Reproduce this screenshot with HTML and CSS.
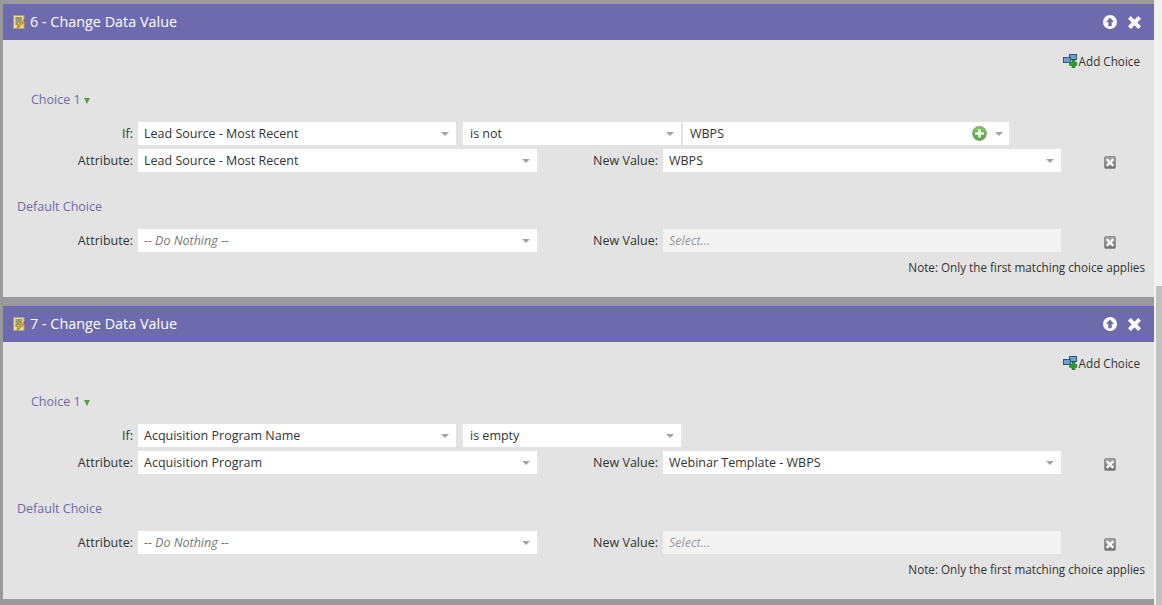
FILE: index.html
```html
<!DOCTYPE html>
<html lang="en">
<head>
<meta charset="utf-8">
<title>Change Data Value</title>
<link rel="stylesheet" href="styles.css">
</head>
<body>
<svg class="defs" width="0" height="0" aria-hidden="true">
  <defs>
    <linearGradient id="g-del" x1="0" y1="0" x2="0" y2="1">
      <stop offset="0" stop-color="#a6a6a6"/>
      <stop offset="1" stop-color="#6e6e6e"/>
    </linearGradient>
    <linearGradient id="g-plus" x1="0" y1="0" x2="0" y2="1">
      <stop offset="0" stop-color="#7ccc5c"/>
      <stop offset="1" stop-color="#4da53c"/>
    </linearGradient>
  </defs>
  <symbol id="ico-flow" viewBox="0 0 13 14">
    <rect x="0.5" y="0.5" width="10.500" height="13" fill="#ebe09a" stroke="#a8a272"/>
    <path d="M2.500 3h6.500M2.500 5h6.500M2.500 7h5M2.500 9h2.500" stroke="#4f4c38" fill="none"/>
    <path d="M4 12.800l.7-2.300 4.300-4.300 1.600 1.600-4.300 4.300z" fill="#e3a52a" stroke="#6d5412" stroke-width=".5"/>
    <path d="M10 5.200l1-1 1.500 1.500-1 1z" fill="#c5392a"/>
  </symbol>
  <symbol id="ico-up" viewBox="0 0 14 14">
    <circle cx="7" cy="7" r="7" fill="#fff"/>
    <path d="M7 2.600L11 7H8.700v4.200H5.300V7H3z" fill="#6e6aae"/>
  </symbol>
  <symbol id="ico-close" viewBox="0 0 14 14">
    <path d="M3 0L7 4l4-4 3 3-4 4 4 4-3 3-4-4-4 4-3-3 4-4-4-4z" fill="#fff"/>
  </symbol>
  <symbol id="ico-del" viewBox="0 0 12 13">
    <rect x=".5" y=".5" width="11" height="12" rx="1.500" fill="url(#g-del)" stroke="#929292"/>
    <path d="M3.600 2.300L6 4.700l2.400-2.400 1.800 1.800-2.400 2.400 2.400 2.400-1.800 1.800L6 8.300l-2.400 2.400-1.800-1.800 2.400-2.400-2.400-2.400z" fill="#f6f6f6"/>
  </symbol>
  <symbol id="ico-add" viewBox="0 0 14 14">
    <rect x="6.500" y="0.5" width="7" height="5" fill="#6f9fd0" stroke="#2f5878"/>
    <rect x="0.5" y="3.500" width="7" height="5" fill="#6f9fd0" stroke="#2f5878"/>
    <path d="M9 6h3v2.500h2v3h-2V14H9v-2.500H6.500v-3H9z" fill="#2f9a35" stroke="#1d6a22" stroke-width=".5"/>
  </symbol>
  <symbol id="ico-plus" viewBox="0 0 14 14">
    <circle cx="7" cy="7" r="6.400" fill="url(#g-plus)" stroke="#8f9a8a" stroke-width="1.100"/>
    <path d="M5.800 3h2.400v2.800H11v2.400H8.200V11H5.800V8.200H3V5.800h2.800z" fill="#eef8e8"/>
  </symbol>
</svg>

<main class="page">
  <section class="card">
    <header class="card-head">
      <svg class="ico-flow"><use href="#ico-flow"/></svg>
      <h2 class="card-title">6 - Change Data Value</h2>
      <svg class="ico-up"><use href="#ico-up"/></svg>
      <svg class="ico-close"><use href="#ico-close"/></svg>
    </header>
    <div class="card-body">
      <div class="add-row"><svg class="ico-add"><use href="#ico-add"/></svg><span>Add Choice</span></div>
      <div class="choice-title"><span>Choice 1</span><i class="green-arrow"></i></div>
      <div class="row row-if">
        <label class="lab">If:</label>
        <div class="sel w-field">Lead Source - Most Recent<i class="caret"></i></div>
        <div class="sel w-op">is not<i class="caret"></i></div>
        <div class="sel w-val">WBPS<svg class="ico-plus"><use href="#ico-plus"/></svg><i class="caret"></i></div>
      </div>
      <div class="row row-attr">
        <label class="lab">Attribute:</label>
        <div class="sel w-attr">Lead Source - Most Recent<i class="caret"></i></div>
        <label class="lab-new">New Value:</label>
        <div class="sel w-new">WBPS<i class="caret"></i></div>
        <svg class="ico-del"><use href="#ico-del"/></svg>
      </div>
      <div class="default-title">Default Choice</div>
      <div class="row row-attr">
        <label class="lab">Attribute:</label>
        <div class="sel w-attr ph">-- Do Nothing --<i class="caret"></i></div>
        <label class="lab-new">New Value:</label>
        <div class="sel w-new ph off">Select...</div>
        <svg class="ico-del"><use href="#ico-del"/></svg>
      </div>
      <p class="note">Note: Only the first matching choice applies</p>
    </div>
  </section>

  <section class="card">
    <header class="card-head">
      <svg class="ico-flow"><use href="#ico-flow"/></svg>
      <h2 class="card-title">7 - Change Data Value</h2>
      <svg class="ico-up"><use href="#ico-up"/></svg>
      <svg class="ico-close"><use href="#ico-close"/></svg>
    </header>
    <div class="card-body">
      <div class="add-row"><svg class="ico-add"><use href="#ico-add"/></svg><span>Add Choice</span></div>
      <div class="choice-title"><span>Choice 1</span><i class="green-arrow"></i></div>
      <div class="row row-if">
        <label class="lab">If:</label>
        <div class="sel w-field">Acquisition Program Name<i class="caret"></i></div>
        <div class="sel w-op">is empty<i class="caret"></i></div>
      </div>
      <div class="row row-attr">
        <label class="lab">Attribute:</label>
        <div class="sel w-attr">Acquisition Program<i class="caret"></i></div>
        <label class="lab-new">New Value:</label>
        <div class="sel w-new">Webinar Template - WBPS<i class="caret"></i></div>
        <svg class="ico-del"><use href="#ico-del"/></svg>
      </div>
      <div class="default-title">Default Choice</div>
      <div class="row row-attr">
        <label class="lab">Attribute:</label>
        <div class="sel w-attr ph">-- Do Nothing --<i class="caret"></i></div>
        <label class="lab-new">New Value:</label>
        <div class="sel w-new ph off">Select...</div>
        <svg class="ico-del"><use href="#ico-del"/></svg>
      </div>
      <p class="note">Note: Only the first matching choice applies</p>
    </div>
  </section>
</main>
<div class="scroll"><div class="thumb"></div></div>
</body>
</html>
```
FILE: styles.css
```css
* { box-sizing: border-box; }
html, body { margin: 0; height: 100%; overflow: hidden; }
body {
  display: flex;
  font-family: "Open Sans", sans-serif;
  font-size: 12.5px;
  color: #333;
  background: #9a999c;
}
.defs { position: absolute; }
.page {
  width: 1154px;
  padding: 4px 0 0 3px;
  display: flex;
  flex-direction: column;
  gap: 9px;
  flex: none;
}
.scroll { flex: 1; background: #f1f1f1; padding: 286px 0 0 2px; }
.thumb { height: 319px; background: #c1c1c1; }
.card { flex: none; }
.card-head {
  height: 36px;
  background: #6e6aae;
  display: flex;
  align-items: center;
  padding: 0 13px 0 10px;
}
.ico-flow { width: 13px; height: 14px; margin-right: 4px; }
.card-title {
  margin: 0 0 2px;
  flex: 1;
  font-size: 14.4px;
  font-weight: 400;
  color: #fff;
}
.ico-up { width: 14px; height: 14px; margin-right: 11px; }
.ico-close { width: 13px; height: 13px; }
.card-body {
  height: 257px;
  background: #e3e3e3;
  padding-top: 13px;
}
.add-row {
  height: 16px;
  display: flex;
  justify-content: flex-end;
  align-items: center;
  gap: 2px;
  padding-right: 14px;
  line-height: 16px;
  font-size: 11.7px;
}
.ico-add { width: 14px; height: 14px; }
.choice-title {
  margin: 22px 0 0 28px;
  height: 18px;
  line-height: 18px;
  color: #6e6aae;
  display: flex;
  align-items: center;
  gap: 3px;
}
.green-arrow {
  width: 0;
  height: 0;
  margin-top: 2px;
  border: 3px solid transparent;
  border-top: 6px solid #55a043;
  border-bottom: 0;
}
.row { display: flex; align-items: center; height: 23px; }
.row-if { margin-top: 13px; }
.row-attr { margin-top: 4px; }
.lab { width: 130px; text-align: right; margin-right: 5px; }
.lab-new { width: 117px; margin-left: 4px; text-align: right; margin-right: 5px; }
.sel {
  position: relative;
  height: 23px;
  line-height: 23px;
  background: #fff;
  padding-left: 7px;
  white-space: nowrap;
  flex: none;
}
.w-field { width: 318px; padding-left: 6px; }
.w-op { width: 218px; margin-left: 7px; }
.w-val { width: 326px; margin-left: 2px; }
.w-attr { width: 399px; padding-left: 6px; }
.w-new { width: 398px; padding-left: 6px; }
.ph { color: #777; font-style: italic; }
.off { background: #f3f3f3; color: #999; }
.caret {
  position: absolute;
  right: 7px;
  top: 10px;
  width: 0;
  height: 0;
  border: 4px solid transparent;
  border-top: 4px solid #a3a3a3;
  border-bottom: 0;
}
.w-val .caret { right: 6px; }
.ico-plus { position: absolute; right: 22px; top: 4px; width: 15px; height: 15px; }
.ico-del { width: 12px; height: 13px; margin-left: 43px; margin-top: 4px; }
.default-title {
  margin: 26px 0 0 14px;
  height: 18px;
  line-height: 18px;
  color: #6e6aae;
}
.default-title + .row { margin-top: 13px; }
.note {
  margin: 6px 9px 0 0;
  text-align: right;
  line-height: 18px;
  font-size: 11.7px;
}
```
